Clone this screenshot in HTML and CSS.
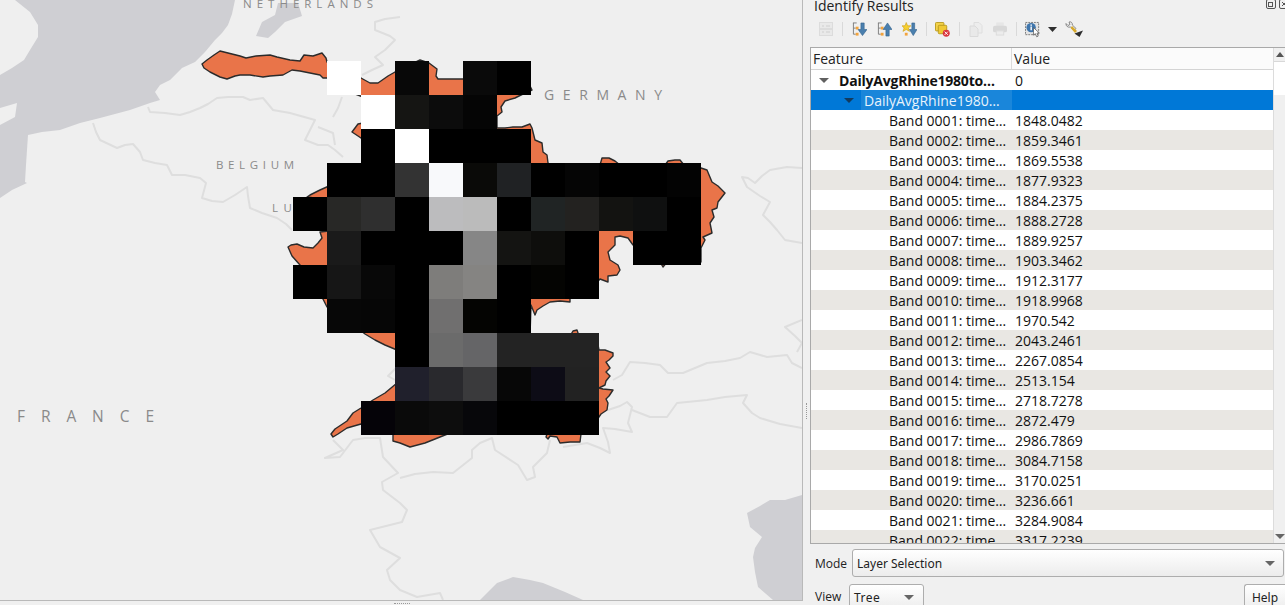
FILE: index.html
```html
<!DOCTYPE html>
<html lang="en">
<head>
<meta charset="utf-8">
<title>Identify Results</title>
<link rel="stylesheet" href="styles.css">
</head>
<body>
<div class="app">
  <main class="map">
    <svg class="map-canvas" width="802" height="600" viewBox="0 0 802 600">
      <rect class="land" width="802" height="600"/>
      <path class="sea" d="M235,0 L232,14 228,25 222,33 215,40 205,52 195,62 182,68 170,80 160,85 155,92 160,100 150,103 130,110 100,118 80,123 60,130 42,132 28,135 27,150 26,165 25,182 27,183 12,190 0,198 L0,125 15,117 17,103 0,108 0,75 12,68 24,60 30,50 38,37 38,25 30,12 15,0 Z"/>
      <path class="sea" d="M278,3 L298,3 302,16 285,22 275,32 268,38 256,36 262,22 275,15 Z"/>
      <path class="sea" d="M802,495 L785,500 770,500 760,506 747,513 750,527 762,537 755,548 753,557 755,572 758,587 773,600 802,600 Z"/>
      <path class="sea" d="M480,600 L497,583 513,577 530,580 543,583 565,592 583,600 Z"/>
      <g class="border">
        <path d="M148,107 L150,112 165,113 180,115 190,112 200,108 208,104 217,98 228,97 243,97 250,100 263,98 273,110 290,113 315,120 310,130 305,140 318,145 328,145 335,150 343,157"/>
        <path d="M333,117 L338,108 342,97 M318,127 L333,133 335,145"/>
        <path d="M93,123 L96,132 100,140 117,148 125,145 133,144 140,152 143,160 155,163 167,165 172,175 185,175 200,178 206,183 202,198 212,201 223,202 235,195 247,187 248,196 250,208 262,213 277,218 286,224 292,230"/>
        <path d="M400,17 L385,19 375,22 375,30 390,36 395,40 385,50 375,57 383,65 372,70 362,75"/>
        <path d="M802,168 L787,167 770,170 762,176 755,183 748,178 742,177 745,183 747,187 760,196 770,202 763,215 770,222 777,230 785,240 802,243"/>
        <path d="M613,380 L622,375 630,362 645,363 660,365 668,373 683,373 695,368 707,363 725,361 740,358 750,352 767,357 787,355 792,363 802,368"/>
        <path d="M608,410 L620,406 627,402 632,407 630,415 628,423 632,432 615,429 603,428 608,442 610,453 600,448 587,443 563,447 M632,410 L650,417 667,417 677,403 707,400 725,397 747,395 743,403 752,413 760,418 780,424 802,428"/>
        <path d="M550,440 L547,453 533,467 535,477 527,480 518,465 495,450 492,438 480,443 472,450 472,458 453,473 433,472 415,474 400,478"/>
        <path d="M333,440 L338,445 343,450 325,458 340,457 353,440 365,438 380,438 383,457 398,473 382,482 383,490 400,503 407,510 402,522 370,530 380,547 400,558 387,570 390,580 400,590 417,597 440,593 443,600"/>
        <path d="M396,368 L388,376 395,380"/>
        <path d="M802,320 L785,327 795,336 802,343 797,352"/>
      </g>
      <text class="label label-sm" x="243" y="8" textLength="130">NETHERLANDS</text>
      <text class="label label-md" x="544" y="100" textLength="118">GERMANY</text>
      <text class="label label-sm" x="216" y="169" textLength="78">BELGIUM</text>
      <text class="label label-sm" x="272" y="212" textLength="20">LU</text>
      <text class="label label-lg" x="17" y="422" textLength="137">FRANCE</text>
      <path class="basin" d="M202,64 L207,60 214,55 220,51 228,53 240,56 246,58 256,56 270,55 277,57 290,60 300,61 304,55 313,56 322,53 326,58 327,62 L361,78 370,83 378,83 388,76 395,72 L420,60 429,63 433,66 437,69 436,76 438,79 L463,79 480,75 530,86 532,90 525,93 515,98 505,101 501,107 502,112 497,116 L497,128 505,128 513,127 522,127 530,124 532,128 535,140 542,143 543,152 547,155 548,163 L560,172 598,172 602,158 609,158 615,161 620,165 660,172 668,161 675,160 680,160 684,165 701,168 707,170 712,182 718,186 725,193 718,202 717,208 712,210 714,217 710,223 712,233 703,237 705,240 701,248 701,262 667,262 663,267 660,262 650,258 633,245 628,238 620,236 615,237 615,245 608,252 610,260 618,265 620,270 617,275 608,276 608,282 600,279 590,290 570,296 570,302 560,301 550,302 543,306 537,310 535,315 531,305 530,336 570,336 573,331 577,330 579,336 598,345 599,350 605,350 613,353 613,356 609,360 606,362 610,368 606,372 610,376 606,381 605,385 599,388 603,389 613,390 609,396 606,399 608,403 607,410 601,414 590,430 581,434 580,442 570,442 560,443 557,437 550,436 548,439 546,437 547,434 540,433 450,433 435,439 425,443 410,447 400,443 393,441 393,434 361,424 347,428 338,434 333,437 331,434 335,429 347,421 353,413 361,408 373,400 385,393 397,383 397,350 385,345 375,340 365,334 360,330 327,307 323,299 300,265 292,256 288,247 291,245 297,244 304,247 313,248 318,243 322,238 320,232 329,231 329,200 307,197 310,195 320,190 329,186 340,170 365,170 365,140 361,138 352,132 358,124 363,123 363,97 345,90 330,78 323,78 320,75 310,73 300,71 292,70 283,75 270,76 263,77 250,75 240,75 235,76 227,79 220,77 210,72 204,68 Z"/>
      <g class="raster" shape-rendering="crispEdges">
        <rect x="327" y="61" width="34" height="34" fill="#fff"/><rect x="395" y="61" width="34" height="34" fill="#080808"/><rect x="463" y="61" width="34" height="34" fill="#0a0a0a"/><rect x="497" y="61" width="34" height="34" fill="#000"/>
        <rect x="361" y="95" width="34" height="34" fill="#fff"/><rect x="395" y="95" width="34" height="34" fill="#151513"/><rect x="429" y="95" width="34" height="34" fill="#0c0c0c"/><rect x="463" y="95" width="34" height="34" fill="#050505"/>
        <rect x="361" y="129" width="34" height="34" fill="#000"/><rect x="395" y="129" width="34" height="34" fill="#fff"/><rect x="429" y="129" width="102" height="34" fill="#000"/>
        <rect x="327" y="163" width="68" height="34" fill="#000"/><rect x="395" y="163" width="34" height="34" fill="#333"/><rect x="429" y="163" width="34" height="34" fill="#f8f9fb"/><rect x="463" y="163" width="34" height="34" fill="#0a0a08"/><rect x="497" y="163" width="34" height="34" fill="#202224"/><rect x="531" y="163" width="34" height="34" fill="#000"/><rect x="565" y="163" width="34" height="34" fill="#050505"/><rect x="599" y="163" width="68" height="34" fill="#000"/><rect x="667" y="163" width="34" height="34" fill="#030303"/>
        <rect x="293" y="197" width="34" height="34" fill="#000"/><rect x="327" y="197" width="34" height="34" fill="#282826"/><rect x="361" y="197" width="34" height="34" fill="#2f2f2f"/><rect x="395" y="197" width="34" height="34" fill="#000"/><rect x="429" y="197" width="34" height="34" fill="#bcbcbe"/><rect x="463" y="197" width="34" height="34" fill="#bbb"/><rect x="497" y="197" width="34" height="34" fill="#000"/><rect x="531" y="197" width="34" height="34" fill="#202424"/><rect x="565" y="197" width="34" height="34" fill="#232220"/><rect x="599" y="197" width="34" height="34" fill="#131311"/><rect x="633" y="197" width="34" height="34" fill="#0f1010"/><rect x="667" y="197" width="34" height="34" fill="#000"/>
        <rect x="327" y="231" width="34" height="34" fill="#1a1a1a"/><rect x="361" y="231" width="102" height="34" fill="#000"/><rect x="463" y="231" width="34" height="34" fill="#868686"/><rect x="497" y="231" width="34" height="34" fill="#141412"/><rect x="531" y="231" width="34" height="34" fill="#0e0e0c"/><rect x="565" y="231" width="34" height="34" fill="#000"/><rect x="633" y="231" width="68" height="34" fill="#000"/>
        <rect x="293" y="265" width="34" height="34" fill="#000"/><rect x="327" y="265" width="34" height="34" fill="#161616"/><rect x="361" y="265" width="34" height="34" fill="#080808"/><rect x="395" y="265" width="34" height="34" fill="#000"/><rect x="429" y="265" width="34" height="34" fill="#7e7d7b"/><rect x="463" y="265" width="34" height="34" fill="#858482"/><rect x="497" y="265" width="34" height="34" fill="#000"/><rect x="531" y="265" width="34" height="34" fill="#040402"/><rect x="565" y="265" width="34" height="34" fill="#000"/>
        <rect x="327" y="299" width="34" height="34" fill="#070707"/><rect x="361" y="299" width="34" height="34" fill="#060606"/><rect x="395" y="299" width="34" height="34" fill="#000"/><rect x="429" y="299" width="34" height="34" fill="#706f6f"/><rect x="463" y="299" width="34" height="34" fill="#040402"/><rect x="497" y="299" width="34" height="34" fill="#000"/>
        <rect x="395" y="333" width="34" height="34" fill="#000"/><rect x="429" y="333" width="34" height="34" fill="#6b6b6b"/><rect x="463" y="333" width="34" height="34" fill="#656567"/><rect x="497" y="333" width="102" height="34" fill="#232323"/>
        <rect x="395" y="367" width="34" height="34" fill="#20202c"/><rect x="429" y="367" width="34" height="34" fill="#29292d"/><rect x="463" y="367" width="34" height="34" fill="#3a3a3c"/><rect x="497" y="367" width="34" height="34" fill="#070707"/><rect x="531" y="367" width="34" height="34" fill="#0d0c16"/><rect x="565" y="367" width="34" height="34" fill="#222"/>
        <rect x="361" y="401" width="34" height="34" fill="#050308"/><rect x="395" y="401" width="34" height="34" fill="#0a0a0a"/><rect x="429" y="401" width="34" height="34" fill="#0d0d0d"/><rect x="463" y="401" width="34" height="34" fill="#07070a"/><rect x="497" y="401" width="102" height="34" fill="#000"/>
      </g>
    </svg>
    <span class="grip grip-h"></span>
  </main>
  <aside class="panel">
    <span class="grip grip-v"></span>
    <div class="title-btns">
      <svg width="10" height="10" viewBox="0 0 10 10"><rect class="tb-line" x=".5" y=".5" width="9" height="9" rx="1.5"/><rect class="tb-line" x="2.5" y="3.5" width="4" height="4"/></svg>
      <svg width="10" height="10" viewBox="0 0 10 10"><rect class="tb-line" x=".5" y=".5" width="9" height="9" rx="1.5"/><path class="tb-line" d="M3,3 L7,7 M7,3 L3,7"/></svg>
    </div>
    <h1 class="title">Identify Results</h1>
    <div class="toolbar">
      <svg class="ti" width="14" height="14" viewBox="0 0 14 14"><rect x=".5" y=".5" width="13" height="13" fill="#e9e9e9" stroke="#dcdcdc"/><path d="M3,4 H5 M7,4 H11 M3,10 H5 M7,10 H11 M1,7 H13" stroke="#cfcfcf" fill="none"/></svg>
      <i class="tsep"></i>
      <svg class="ti" width="15" height="15" viewBox="0 0 16 16"><path d="M1.5,1 V13 H4 M1.5,6.5 H4 M1,1 H5" stroke="#7d7d7d" fill="none"/><rect x="4" y="5" width="3" height="3" fill="#f2a33c"/><rect x="4" y="11.5" width="3" height="3" fill="#f2a33c"/><path d="M9.5,1 H13 V8 H16 L11.2,14.5 6.5,8 H9.5 Z" fill="#4a7fae" stroke="#2f5f8a" stroke-width=".6"/></svg>
      <svg class="ti t-gap" width="15" height="15" viewBox="0 0 16 16"><path d="M1.5,1 V13 H4 M1.5,6.5 H4 M1,1 H5" stroke="#7d7d7d" fill="none"/><rect x="4" y="5" width="3" height="3" fill="#f2a33c"/><rect x="4" y="11.5" width="3" height="3" fill="#f2a33c"/><path d="M9.5,15 H13 V8 H16 L11.2,1 6.5,8 H9.5 Z" fill="#4a7fae" stroke="#2f5f8a" stroke-width=".6"/></svg>
      <svg class="ti t-gap" width="15" height="15" viewBox="0 0 16 16"><path d="M4.5,0.5 L6,4 9.5,4 6.8,6.5 8,10 4.5,8 1,10 2.2,6.5 0,4 3.2,4 Z" fill="#f6cf2d" stroke="#c99a12" stroke-width=".6"/><rect x="3" y="11.5" width="3" height="3" fill="#f2a33c"/><path d="M10.5,1 H13.5 V8 H16 L12,14.5 8,8 H10.5 Z" fill="#4a7fae" stroke="#2f5f8a" stroke-width=".6"/></svg>
      <i class="tsep tsep-tight"></i>
      <svg class="ti" width="15" height="15" viewBox="0 0 16 16"><rect x=".5" y=".5" width="9" height="9" rx="1" fill="#f3d24a" stroke="#b99a1e"/><rect x="3.5" y="3.5" width="9" height="9" rx="1" fill="#f0c933" stroke="#b99a1e"/><circle cx="12" cy="12" r="3.7" fill="#d9363e"/><path d="M10.3,10.3 L13.7,13.7 M13.7,10.3 L10.3,13.7" stroke="#fff" fill="none"/></svg>
      <i class="tsep"></i>
      <svg class="ti" width="14" height="15" viewBox="0 0 14 15"><path d="M5,.5 H10 L13,3.5 V11 H5 Z" fill="#ededed" stroke="#dedede"/><path d="M1,4 H6 L9,7 V14.5 H1 Z" fill="#e9e9e9" stroke="#dadada"/></svg>
      <svg class="ti t-gap" width="14" height="14" viewBox="0 0 15 14"><rect x="3.5" y="0" width="8" height="4" fill="#e6e6e6"/><rect x="0" y="3.5" width="15" height="7" rx="2" fill="#d8d8d8"/><rect x="3.5" y="9" width="8" height="4.5" fill="#ececec" stroke="#dcdcdc"/></svg>
      <i class="tsep tsep-last"></i>
      <svg class="ti" width="16" height="17" viewBox="0 0 17 18"><rect x=".5" y="1.5" width="14" height="13" fill="#e4e4e4" stroke="#777" stroke-dasharray="2 1"/><circle cx="6.5" cy="7" r="5" fill="#3f76ad"/><rect x="5.8" y="5.8" width="1.5" height="4" fill="#fff"/><rect x="5.8" y="3.6" width="1.5" height="1.5" fill="#fff"/><path d="M9,7 L9,15 11,13.4 12.5,16.8 14,16 12.7,12.8 15.2,12.7 Z" fill="#fff" stroke="#444" stroke-width=".7"/></svg>
      <svg class="t-drop" width="9" height="5" viewBox="0 0 9 5"><path d="M0,0 H9 L4.5,5 Z" fill="#2f2f2f"/></svg>
      <svg class="t-wrench" width="18" height="16" viewBox="0 0 18 16"><path d="M1,2.5 L3,4.5 5,3.5 4,1 C6,.3 7.6,1.8 7.3,4 L11,7.5 9,9.5 5.4,6 C3,6.8 .6,5 1,2.5 Z" fill="#f1f1f1" stroke="#6e6e6e" stroke-width=".8"/><path d="M7,5 L12,10 10,12 5.6,7 Z" fill="#d7a92b"/><path d="M9.5,12.5 L18,9.5 14.5,16 Z" fill="#2b2b2b"/></svg>
    </div>
    <div class="tree">
      <div class="tree-body">
        <div class="head"><span class="hcell">Feature</span><span class="hcell hval">Value</span></div>
        <div class="rows">
          <div class="row row-top"><span class="feat f0"><i class="tri"></i><b>DailyAvgRhine1980to…</b></span><span class="val">0</span></div>
          <div class="row row-sel"><span class="feat f1"><i class="tri tri-dark"></i><span class="sel-text">DailyAvgRhine1980…</span></span><span class="val"></span></div>
          <div class="row"><span class="feat f2">Band 0001: time…</span><span class="val">1848.0482</span></div>
          <div class="row alt"><span class="feat f2">Band 0002: time…</span><span class="val">1859.3461</span></div>
          <div class="row"><span class="feat f2">Band 0003: time…</span><span class="val">1869.5538</span></div>
          <div class="row alt"><span class="feat f2">Band 0004: time…</span><span class="val">1877.9323</span></div>
          <div class="row"><span class="feat f2">Band 0005: time…</span><span class="val">1884.2375</span></div>
          <div class="row alt"><span class="feat f2">Band 0006: time…</span><span class="val">1888.2728</span></div>
          <div class="row"><span class="feat f2">Band 0007: time…</span><span class="val">1889.9257</span></div>
          <div class="row alt"><span class="feat f2">Band 0008: time…</span><span class="val">1903.3462</span></div>
          <div class="row"><span class="feat f2">Band 0009: time…</span><span class="val">1912.3177</span></div>
          <div class="row alt"><span class="feat f2">Band 0010: time…</span><span class="val">1918.9968</span></div>
          <div class="row"><span class="feat f2">Band 0011: time…</span><span class="val">1970.542</span></div>
          <div class="row alt"><span class="feat f2">Band 0012: time…</span><span class="val">2043.2461</span></div>
          <div class="row"><span class="feat f2">Band 0013: time…</span><span class="val">2267.0854</span></div>
          <div class="row alt"><span class="feat f2">Band 0014: time…</span><span class="val">2513.154</span></div>
          <div class="row"><span class="feat f2">Band 0015: time…</span><span class="val">2718.7278</span></div>
          <div class="row alt"><span class="feat f2">Band 0016: time…</span><span class="val">2872.479</span></div>
          <div class="row"><span class="feat f2">Band 0017: time…</span><span class="val">2986.7869</span></div>
          <div class="row alt"><span class="feat f2">Band 0018: time…</span><span class="val">3084.7158</span></div>
          <div class="row"><span class="feat f2">Band 0019: time…</span><span class="val">3170.0251</span></div>
          <div class="row alt"><span class="feat f2">Band 0020: time…</span><span class="val">3236.661</span></div>
          <div class="row"><span class="feat f2">Band 0021: time…</span><span class="val">3284.9084</span></div>
          <div class="row alt"><span class="feat f2">Band 0022: time…</span><span class="val">3317.2239</span></div>
        </div>
      </div>
      <div class="scroll">
        <div class="sbtn"><i class="up"></i></div>
        <div class="thumb"></div>
        <div class="track"></div>
        <div class="sbtn sbtn-down"><i class="down"></i></div>
      </div>
    </div>
    <div class="mode-row">
      <span class="lbl">Mode</span>
      <div class="combo combo-wide"><span>Layer Selection</span><i class="down"></i></div>
    </div>
    <div class="view-row">
      <span class="lbl">View</span>
      <div class="combo combo-small"><span>Tree</span><i class="down"></i></div>
      <button class="help">Help</button>
    </div>
  </aside>
</div>
</body>
</html>
```

FILE: styles.css
```css
* { box-sizing: border-box; }
html, body { margin: 0; padding: 0; overflow: hidden; }
body { width: 1285px; height: 605px; background: #f0f0f0; font-family: "Open Sans", "Liberation Sans", sans-serif; color: #111; }
.app { display: flex; width: 1285px; height: 605px; overflow: hidden; }

/* map */
.map { position: relative; flex: none; width: 803px; height: 601px; border-right: 1px solid #b9b9b9; border-bottom: 1px solid #b9b9b9; }
.map-canvas { display: block; }
.land { fill: #efefef; }
.sea { fill: #cfcfd3; }
.border path { fill: none; stroke: #dedede; stroke-width: 2; stroke-linejoin: round; }
.basin { fill: #e97449; stroke: #2b2b2b; stroke-width: 1.4; stroke-linejoin: round; }
.label { fill: #8a8a8a; font-family: "Open Sans", sans-serif; }
.label-sm { font-size: 11.5px; }
.label-md { font-size: 14px; }
.label-lg { font-size: 15.5px; }
.grip { position: absolute; display: block; }
.grip-h { left: 394px; top: 603px; width: 16px; height: 2px; border-top: 1px dotted #999; }
.grip-v { left: 3px; top: 403px; width: 2px; height: 16px; border-left: 1px dotted #999; }

/* panel */
.panel { position: relative; flex: 1; min-width: 0; padding-left: 7px; display: flex; flex-direction: column; }
.title { margin: 0; padding-left: 4px; height: 14px; font-size: 14px; font-weight: 400; line-height: 12px; color: #222; }
.title-btns { position: absolute; right: -4px; top: -1px; display: flex; gap: 3px; }
.tb-line { fill: none; stroke: #555; }
.toolbar { display: flex; align-items: center; height: 22px; margin-top: 4px; padding-left: 9px; }
.ti { flex: none; }
.t-gap { margin-left: 10px; }
.tsep { flex: none; width: 1px; height: 14px; background: #d9d9d9; margin: 0 9px; }
.tsep-tight { margin-right: 8px; }
.tsep-last { margin-right: 8px; }
.t-drop { flex: none; margin-left: 7px; }
.t-wrench { flex: none; margin-left: 8px; }

.tree { display: flex; height: 497px; margin-top: 7px; border: 1px solid #a9a9a9; border-right: 0; background: #fff; overflow: hidden; }
.tree-body { flex: none; width: 462px; overflow: hidden; }
.head { display: flex; height: 22px; background: #fbfbfb; border-bottom: 1px solid #d4d4d4; }
.hcell { width: 201px; padding-left: 2px; font-size: 14px; line-height: 21px; border-right: 1px solid #dcdcdc; color: #222; }
.hval { flex: 1; width: auto; border-right: 0; padding-left: 2px; }
.row { display: flex; height: 20px; padding-top: 1px; font-size: 14px; line-height: 20px; background: #fff; white-space: nowrap; color: #111; }
.row.alt { background: #e9e7e3; }
.feat { display: flex; align-items: flex-start; width: 201px; height: 20px; flex: none; overflow: hidden; }
.f0 { padding-left: 8px; }
.f0 b { margin-left: 10px; font-weight: 700; letter-spacing: -.2px; }
.f1 { padding-left: 33px; margin-top: -1px; padding-top: 0; }
.f2 { padding-left: 78px; }
.val { padding-left: 3px; flex: 1; }
.row-sel { background: #0078d7; color: #e8f3fc; }
.sel-text { display: block; height: 20px; line-height: 22px; flex: 1; margin-left: 7px; padding-left: 3px; background: #1a86da; }
.tri { flex: none; width: 0; height: 0; margin-top: 7px; border-left: 5px solid transparent; border-right: 5px solid transparent; border-top: 5px solid #606060; }
.tri-dark { border-top-color: #123a5e; margin-top: 8px; }

.scroll { flex: 1; display: flex; flex-direction: column; background: #f0f0f0; border-left: 1px solid #dcdcdc; }
.sbtn { flex: none; height: 14px; display: flex; align-items: center; justify-content: center; background: #f0f0f0; border-bottom: 1px solid #d8d8d8; }
.sbtn-down { border-bottom: 0; border-top: 0; }
.thumb { flex: none; height: 33px; background: #fff; }
.track { flex: 1; background: #f0f0f0; }
.up { width: 0; height: 0; border-left: 4.5px solid transparent; border-right: 4.5px solid transparent; border-bottom: 5px solid #555; }
.down { flex: none; width: 0; height: 0; border-left: 5px solid transparent; border-right: 5px solid transparent; border-top: 5px solid #666; }

.mode-row { display: flex; align-items: center; height: 28px; margin-top: 5px; padding-left: 5px; }
.view-row { display: flex; align-items: flex-start; height: 21px; margin-top: 7px; padding-left: 5px; }
.lbl { flex: none; font-size: 12px; width: 37px; color: #222; }
.view-row .lbl { width: 34px; line-height: 26px; }
.combo { display: flex; align-items: center; justify-content: space-between; border: 1px solid #adadad; border-radius: 3px; background: linear-gradient(#fff, #ececec); font-size: 12px; color: #222; font-family: "Noto Sans", sans-serif; }
.combo-wide { flex: none; width: 432px; height: 28px; padding: 0 8px 0 4px; }
.combo-small { flex: none; width: 75px; height: 27px; padding: 0 9px 0 4px; letter-spacing: .5px; }
.help { margin-left: auto; width: 41px; height: 27px; padding: 0; border: 1px solid #adadad; border-right: 0; border-radius: 3px 0 0 3px; background: linear-gradient(#fff, #ececec); font: 12px "Noto Sans", sans-serif; color: #222; text-align: center; }
```
